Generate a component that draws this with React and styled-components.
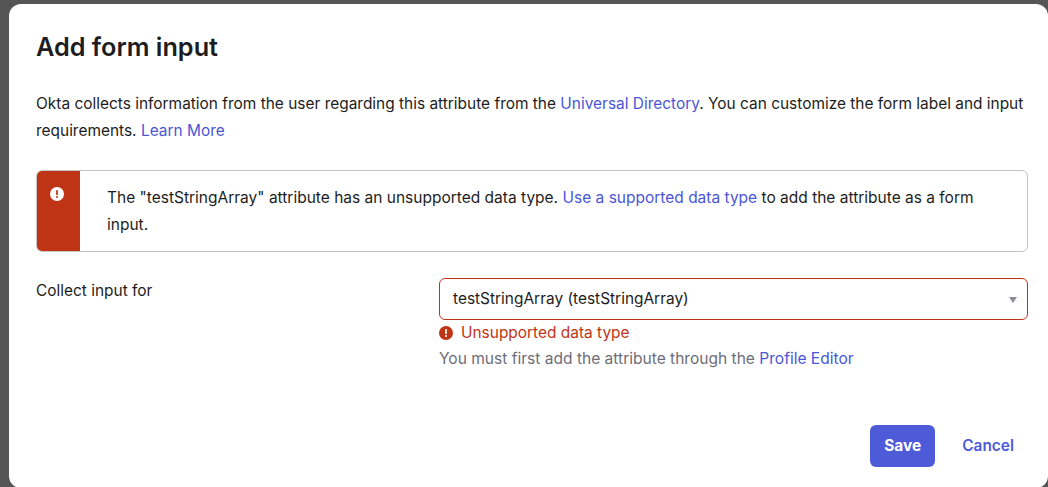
import React from 'react';
import styled, { createGlobalStyle } from 'styled-components';

const ErrorIcon = ({ size, bg, fg }) => (
  <svg width={size} height={size} viewBox="0 0 16 16">
    <circle cx="8" cy="8" r="8" fill={bg} />
    <rect x="7" y="3.4" width="2" height="6" rx="1" fill={fg} />
    <circle cx="8" cy="11.5" r="1.15" fill={fg} />
  </svg>
);

const App = () => (
  <Backdrop>
    <GlobalStyle />
    <Modal>
      <Title>Add form input</Title>
      <Intro>
        Okta collects information from the user regarding this attribute from the{' '}
        <Link>Universal Directory</Link>. You can customize the form label and input
        requirements. <Link>Learn More</Link>
      </Intro>
      <Alert>
        <AlertSide>
          <ErrorIcon size={14} bg="#fff" fg="#bf3415" />
        </AlertSide>
        <AlertBody>
          The "testStringArray" attribute has an unsupported data type.{' '}
          <Link>Use a supported data type</Link> to add the attribute as a form input.
        </AlertBody>
      </Alert>
      <FormRow>
        <FieldLabel>Collect input for</FieldLabel>
        <Field>
          <Select>
            testStringArray (testStringArray)
            <Caret />
          </Select>
          <ErrorLine>
            <ErrorIcon size={14} bg="#bf3415" fg="#fff" />
            Unsupported data type
          </ErrorLine>
          <Hint>
            You must first add the attribute through the <Link>Profile Editor</Link>
          </Hint>
        </Field>
      </FormRow>
      <Footer>
        <SaveButton>Save</SaveButton>
        <CancelButton>Cancel</CancelButton>
      </Footer>
    </Modal>
  </Backdrop>
);

export default App;

const GlobalStyle = createGlobalStyle`
  html, body {
    margin: 0;
    height: 100%;
    overflow: hidden;
  }
  body {
    font-family: Inter, "Liberation Sans", sans-serif;
    color: #1d1d21;
  }
`;

const Backdrop = styled.div`
  box-sizing: border-box;
  width: 1048px;
  height: 487px;
  padding: 4px 0 0 9px;
  background: #555;
  overflow: hidden;
`;

const Modal = styled.div`
  box-sizing: border-box;
  width: 1039px;
  height: 484px;
  padding: 28px 20px 0 27px;
  background: #fff;
  border-radius: 12px;
`;

const Title = styled.h1`
  margin: 0;
  font-size: 25.25px;
  line-height: 30px;
  font-weight: 600;
`;

const Intro = styled.p`
  margin: 28px 0 0;
  font-size: 15.45px;
  line-height: 27px;
`;

const Link = styled.a`
  color: #4a56d8;
`;

const Alert = styled.div`
  display: flex;
  box-sizing: border-box;
  height: 82px;
  margin-top: 26px;
  border: 1px solid #c4c4c4;
  border-radius: 6px;
  overflow: hidden;
`;

const AlertSide = styled.div`
  flex: none;
  display: flex;
  justify-content: center;
  box-sizing: border-box;
  width: 44px;
  margin: -1px 0 -1px -1px;
  padding: 17px 2px 0 0;
  background: #bf3415;
`;

const AlertBody = styled.div`
  padding: 13px 45px 0 27px;
  font-size: 15.5px;
  line-height: 27px;
`;

const FormRow = styled.div`
  display: flex;
  margin-top: 26px;
`;

const FieldLabel = styled.label`
  flex: none;
  width: 403px;
  padding-top: 1px;
  font-size: 15.45px;
  line-height: 24px;
`;

const Field = styled.div`
  flex: 1;
`;

const Select = styled.div`
  position: relative;
  box-sizing: border-box;
  height: 42px;
  padding: 0 13px;
  border: 1px solid #bf3415;
  border-radius: 6px;
  font-size: 15.45px;
  line-height: 40px;
`;

const Caret = styled.span`
  position: absolute;
  top: 18px;
  right: 10px;
  border-left: 4px solid transparent;
  border-right: 4px solid transparent;
  border-top: 6px solid #8c8c96;
`;

const ErrorLine = styled.div`
  display: flex;
  align-items: center;
  gap: 8px;
  margin-top: 2px;
  font-size: 15.45px;
  line-height: 22px;
  color: #bf3415;
`;

const Hint = styled.div`
  margin-top: 4px;
  font-size: 15.55px;
  line-height: 22px;
  color: #6e6e78;
`;

const Footer = styled.div`
  display: flex;
  justify-content: flex-end;
  align-items: center;
  gap: 27px;
  margin-top: 55px;
  padding-right: 14px;
`;

const SaveButton = styled.button`
  box-sizing: border-box;
  width: 65px;
  height: 42px;
  padding: 0 0 2px;
  border: 0;
  border-radius: 6px;
  background: #4e5bd9;
  color: #fff;
  font: 700 15.45px Inter, sans-serif;
`;

const CancelButton = styled.button`
  padding: 0 0 2px;
  border: 0;
  background: none;
  color: #4e5bd9;
  font: 600 15.45px Inter, sans-serif;
`;
